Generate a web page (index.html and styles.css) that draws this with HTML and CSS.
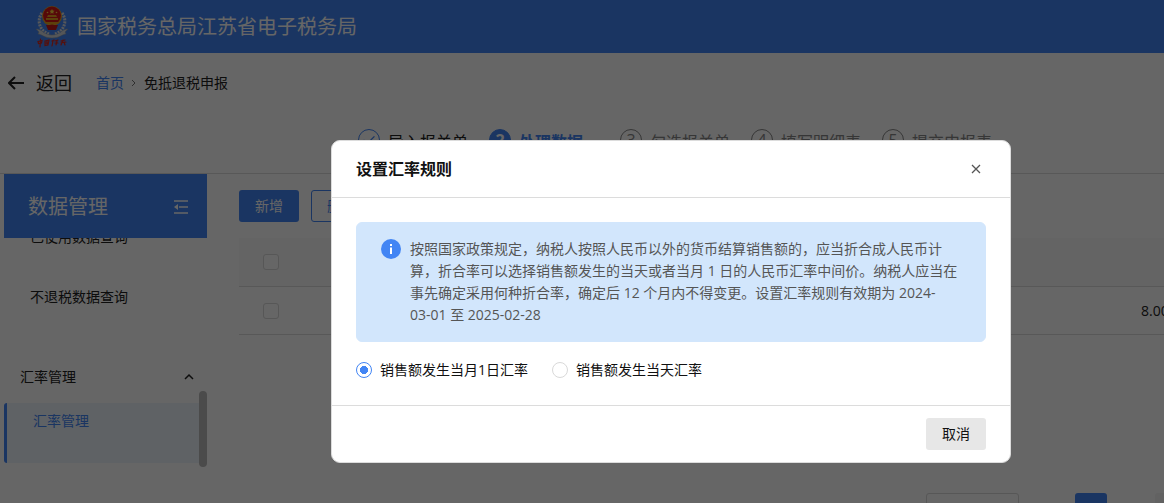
FILE: index.html
```html
<!DOCTYPE html>
<html lang="zh-CN">
<head>
<meta charset="utf-8">
<meta name="viewport" content="width=device-width, initial-scale=1">
<title>免抵退税申报</title>
<link rel="stylesheet" href="styles.css">
</head>
<body>
<div class="app">
  <header class="topbar">
    <svg class="emblem" viewBox="0 0 34 42" aria-hidden="true">
      <g fill="none" stroke="#d9dde2" stroke-width="3" stroke-dasharray="2 1">
        <path d="M7 7C1 15 5 25 14 28"/>
        <path d="M27 7c6 8 2 18-7 21"/>
      </g>
      <path d="M1 23c3 0 5 1 7 3 3 2 6 3 9 3s6-1 9-3c2-2 4-3 7-3l-3 3 1 2c-4 0-6 4-14 4S7 28 3 28l1-2z" fill="#d2d7dd" stroke="#8f99a5" stroke-width=".5"/>
      <circle cx="17" cy="10" r="10" fill="#e5ab22"/>
      <circle cx="17" cy="9.5" r="9" fill="#d81818"/>
      <path d="M11 12h12v2H11zM13 9h8l1 2H12zM9 16h16l-2 2H11z" fill="#e8a020"/>
      <path d="m17 3 .8 1.600 1.700.2-1.200 1.200.3 1.800-1.600-.9-1.600.9.3-1.800-1.200-1.200 1.700-.2z" fill="#ffd23c"/>
      <g fill="#ffd23c"><circle cx="12.500" cy="6.500" r=".8"/><circle cx="21.500" cy="6.500" r=".8"/></g>
      <path d="M11 19h12l-2 5h-8z" fill="#c91b1b"/>
      <g fill="none" stroke="#d5281e" stroke-width="1.200" stroke-linecap="round">
        <path d="M3 35.500 7 34.500 6.500 37 3.500 37.500zM5.500 33 5 41M10 35l4-1-1 5-3 .5zM11 37h2M12 35v3M17 35l2-1M18 35l-1 5M20 35l3-1M20 37h3M22 35l-1 4M26 35l4-1M26 37l5-1M28 34l-2 5M29 36l1 3"/>
      </g>
    </svg>
    <h1 class="topbar-title">国家税务总局江苏省电子税务局</h1>
  </header>

  <nav class="crumbs" aria-label="面包屑">
    <button class="back" type="button">
      <svg viewBox="0 0 16 16" width="16" height="16" aria-hidden="true"><path d="M7 2 1 8l6 6M1 8h15" fill="none" stroke="currentColor" stroke-width="2"/></svg>
      <span>返回</span>
    </button>
    <a class="crumb-link" href="#">首页</a>
    <svg class="crumb-sep" viewBox="0 0 8 8" width="8" height="8" aria-hidden="true"><path d="m2 1 3 3-3 3" fill="none" stroke="currentColor"/></svg>
    <span>免抵退税申报</span>
  </nav>

  <ol class="steps">
    <li class="step done"><span class="dot"><svg viewBox="0 0 22 22" width="20" height="20" aria-hidden="true"><path d="m5 11 4 4 8-8" fill="none" stroke="currentColor" stroke-width="1.500"/></svg></span>导入报关单</li>
    <li class="step current"><span class="dot">2</span>处理数据</li>
    <li class="step"><span class="dot">3</span>勾选报关单</li>
    <li class="step"><span class="dot">4</span>填写明细表</li>
    <li class="step"><span class="dot">5</span>提交申报表</li>
  </ol>

  <div class="layout">
    <aside class="sidebar">
      <div class="side-title">
        <h2>数据管理</h2>
        <button class="fold" type="button" aria-label="收起菜单">
          <svg viewBox="0 0 14 14" width="14" height="14" aria-hidden="true"><path d="M0 1h14M5 7h9M0 13h14" stroke="currentColor" stroke-width="1.500"/><path d="M0 7l4-3v6z" fill="currentColor"/></svg>
        </button>
      </div>
      <div class="side-menu">
        <a class="side-item first" href="#">已使用数据查询</a>
        <a class="side-item" href="#">不退税数据查询</a>
        <button class="side-group" type="button">汇率管理
          <svg viewBox="0 0 10 10" width="10" height="10" aria-hidden="true"><path d="m1 7 4-4 4 4" fill="none" stroke="currentColor" stroke-width="1.500"/></svg>
        </button>
        <a class="side-item selected" href="#">汇率管理</a>
        <span class="thumb"></span>
      </div>
    </aside>

    <main class="content">
      <div class="actions">
        <button class="btn primary" type="button">新增</button>
        <button class="btn outline" type="button">删除</button>
      </div>
      <table class="grid">
        <thead><tr><th><input class="check" type="checkbox" aria-label="全选"></th><th></th></tr></thead>
        <tbody><tr><td><input class="check" type="checkbox" aria-label="选择此行"></td><td class="amount">8.00</td></tr></tbody>
      </table>
      <div class="pager">
        <select class="page-size" aria-label="每页条数"><option></option></select>
        <button class="page current-page" type="button" aria-label="当前页"></button>
        <button class="page next-page" type="button" aria-label="下一页"></button>
      </div>
    </main>
  </div>
</div>

<div class="mask">
  <section class="dialog" role="dialog" aria-modal="true" aria-labelledby="dialog-title">
    <header class="dialog-head">
      <h2 id="dialog-title">设置汇率规则</h2>
      <button class="close" type="button" aria-label="关闭">
        <svg viewBox="0 0 10 10" width="10" height="10" aria-hidden="true"><path d="m1 1 8 8M9 1 1 9" stroke="currentColor" stroke-width="1.300"/></svg>
      </button>
    </header>
    <div class="dialog-body">
      <div class="notice">
        <svg class="info" viewBox="0 0 20 20" width="20" height="20" aria-hidden="true"><circle cx="10" cy="10" r="10" fill="#4285f4"/><path d="M9 8.500h2V15H9zM9 5h2v2H9z" fill="#fff"/></svg>
        <p>按照国家政策规定，纳税人按照人民币以外的货币结算销售额的，应当折合成人民币计算，折合率可以选择销售额发生的当天或者当月 1 日的人民币汇率中间价。纳税人应当在事先确定采用何种折合率，确定后 12 个月内不得变更。设置汇率规则有效期为 2024-<span class="month-day">03-01</span> 至 2025-02-28</p>
      </div>
      <div class="choices" role="radiogroup" aria-labelledby="dialog-title">
        <label class="choice"><input type="radio" name="rule" checked>销售额发生当月1日汇率</label>
        <label class="choice"><input type="radio" name="rule">销售额发生当天汇率</label>
      </div>
    </div>
    <footer class="dialog-foot"><button class="btn cancel" type="button">取消</button></footer>
  </section>
</div>
</body>
</html>
```
FILE: styles.css
```css
* { box-sizing: border-box; }

body {
  margin: 0;
  overflow: hidden;
  background: #fff;
  color: #222;
  font: 14px/22px "Open Sans", "Noto Sans CJK SC", sans-serif;
}

button, input, select { font: inherit; color: inherit; margin: 0; }
button { padding: 0; border: 0; background: none; }
a { color: inherit; text-decoration: none; }
h1, h2, p, ol { margin: 0; padding: 0; }

.app { height: 100vh; overflow: hidden; }

.topbar {
  display: flex;
  align-items: center;
  gap: 8px;
  height: 53px;
  padding-left: 35px;
  background: #4285f4;
}
.emblem { width: 34px; height: 42px; }
.topbar-title { color: #fff; font-size: 20px; font-weight: 400; line-height: 28px; }

.crumbs { display: flex; align-items: center; height: 60px; padding-left: 8px; }
.back { display: flex; align-items: center; gap: 12px; margin-right: 24px; font-size: 18px; }
.crumb-link { color: #4285f4; }
.crumb-sep { margin: 0 6px; color: #777; }

.steps {
  display: flex;
  justify-content: center;
  height: 61px;
  padding: 16px 0 0 207px;
  border-bottom: 1px solid #ddd;
  list-style: none;
}
.step { display: flex; gap: 8px; width: 131px; color: #888; font-size: 16px; line-height: 26px; white-space: nowrap; }
.dot {
  display: flex;
  align-items: center;
  justify-content: center;
  width: 22px;
  height: 22px;
  border: 1px solid currentColor;
  border-radius: 50%;
}
.done { color: #222; }
.done .dot { color: #4285f4; }
.current { color: #4285f4; font-weight: 700; }
.current .dot { border-color: #4285f4; background: #4285f4; color: #fff; }

.layout { display: flex; gap: 32px; padding-left: 4px; }
.sidebar { flex: 0 0 203px; }
.side-title {
  position: relative;
  z-index: 1;
  display: flex;
  align-items: center;
  justify-content: space-between;
  height: 64px;
  padding: 2px 19px 0 24px;
  background: #4285f4;
  color: #fff;
}
.side-title h2 { font-size: 20px; font-weight: 400; line-height: 28px; }
.fold { display: flex; }
.side-menu { position: relative; }
.side-item { display: flex; align-items: center; height: 60px; padding-left: 26px; }
.first { margin-top: -31px; }
.side-group {
  display: flex;
  align-items: center;
  justify-content: space-between;
  width: 100%;
  height: 52px;
  margin-top: 24px;
  padding: 0 13px 0 16px;
}
.selected {
  align-items: flex-start;
  padding-top: 7px;
  border-left: 3px solid #4285f4;
  border-radius: 3px;
  background: #edf5fc;
  color: #4285f4;
}
.thumb {
  position: absolute;
  right: 0;
  bottom: -4px;
  width: 8px;
  height: 76px;
  border-radius: 4px;
  background: #bbb;
}

.content { flex: 1; min-width: 0; padding-top: 16px; }
.actions { display: flex; gap: 12px; }
.btn { min-width: 60px; height: 32px; border-radius: 3px; }
.primary { background: #4285f4; color: #fff; }
.outline { border: 1px solid #4285f4; color: #4285f4; }

.grid { width: 100%; margin-top: 16px; border-collapse: separate; border-spacing: 0; table-layout: fixed; }
.grid th, .grid td { height: 48px; padding: 0; border-bottom: 1px solid #ddd; }
.grid th { height: 49px; background: #fafafa; }
.grid th:first-child, .grid td:first-child { width: 64px; text-align: center; vertical-align: middle; }
.grid .amount { padding-left: 838px; overflow: hidden; white-space: nowrap; }
.check {
  display: block;
  width: 16px;
  height: 16px;
  margin: 0 auto;
  border: 1px solid #d9d9d9;
  border-radius: 3px;
  appearance: none;
  background: #fff;
}

.pager { display: flex; justify-content: flex-end; margin-top: 158px; }
.page-size { width: 93px; height: 32px; border: 1px solid #d9d9d9; border-radius: 3px; background: #fff; appearance: none; }
.page { width: 32px; height: 32px; border-radius: 3px; }
.current-page { margin: 0 48px 0 56px; background: #4285f4; }
.next-page { width: 9px; border-radius: 3px 0 0 3px; background: #f5f5f5; }

.mask {
  position: fixed;
  inset: 0;
  z-index: 10;
  display: flex;
  align-items: flex-start;
  justify-content: center;
  padding: 140px 16px 16px 194px;
  background: rgba(0, 0, 0, .6);
}
.dialog { width: 100%; max-width: 680px; border: 1px solid #dcdcdc; border-radius: 9px; background: #fff; }
.dialog-head {
  display: flex;
  align-items: center;
  justify-content: space-between;
  height: 57px;
  padding: 0 29px 0 24px;
  border-bottom: 1px solid #dcdcdc;
}
.dialog-head h2 { color: #111; font-size: 16px; font-weight: 700; line-height: 24px; }
.close { display: flex; color: #555; }
.dialog-body { padding: 24px; color: #111; }
.notice {
  display: flex;
  gap: 9px;
  padding: 15px 24px;
  border: 1px solid #d2e6fc;
  border-radius: 6px;
  background: #d2e6fc;
  color: #555;
}
.info { flex: none; margin-top: 1px; }
.month-day { white-space: nowrap; }
.choices { display: flex; flex-wrap: wrap; gap: 24px; margin-top: 17px; }
.choice { display: flex; align-items: center; gap: 8px; }
.choice input {
  width: 16px;
  height: 16px;
  border: 1px solid #d9d9d9;
  border-radius: 50%;
  appearance: none;
}
.choice input:checked { border-color: #4285f4; background: radial-gradient(circle, #4285f4 4px, #fff 4px); }
.dialog-foot { display: flex; justify-content: flex-end; padding: 12px 24px; border-top: 1px solid #dcdcdc; }
.cancel { background: #e7e7e7; color: #111; }
```
